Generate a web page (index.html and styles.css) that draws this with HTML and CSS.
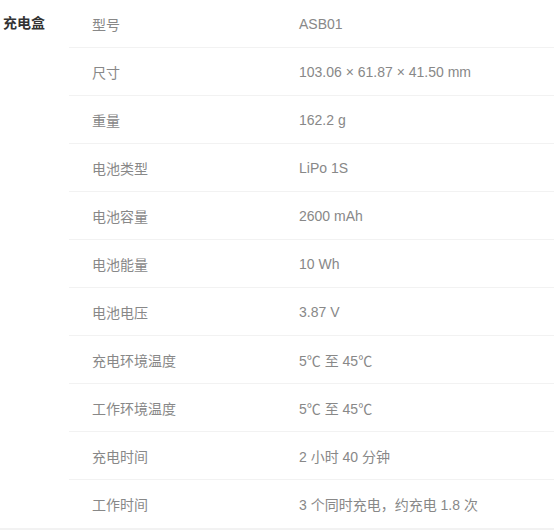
FILE: index.html
```html
<!DOCTYPE html>
<html lang="zh-CN">
<head>
<meta charset="utf-8">
<title>充电盒</title>
<link rel="stylesheet" href="styles.css">
</head>
<body>
<section class="spec">
  <h3 class="spec-title">充电盒</h3>
  <div class="spec-rows">
    <div class="row"><span class="key">型号</span><span class="val">ASB01</span></div>
    <div class="row"><span class="key">尺寸</span><span class="val">103.06 × 61.87 × 41.50 mm</span></div>
    <div class="row"><span class="key">重量</span><span class="val">162.2 g</span></div>
    <div class="row"><span class="key">电池类型</span><span class="val">LiPo 1S</span></div>
    <div class="row"><span class="key">电池容量</span><span class="val">2600 mAh</span></div>
    <div class="row"><span class="key">电池能量</span><span class="val">10 Wh</span></div>
    <div class="row"><span class="key">电池电压</span><span class="val">3.87 V</span></div>
    <div class="row"><span class="key">充电环境温度</span><span class="val">5℃ 至 45℃</span></div>
    <div class="row"><span class="key">工作环境温度</span><span class="val">5℃ 至 45℃</span></div>
    <div class="row"><span class="key">充电时间</span><span class="val">2 小时 40 分钟</span></div>
    <div class="row"><span class="key">工作时间</span><span class="val">3 个同时充电，约充电 1.8 次</span></div>
  </div>
</section>
</body>
</html>
```

FILE: styles.css
```css
html, body {
  margin: 0;
  padding: 0;
  background: #ffffff;
}
body {
  font-family: "Liberation Sans", "Noto Sans CJK SC", sans-serif;
  font-size: 14px;
}
.spec {
  display: flex;
  border-bottom: 2px solid #f2f2f2;
}
.spec-title {
  width: 66px;
  margin: 0;
  padding-left: 3px;
  font-size: 14px;
  font-weight: bold;
  color: #333333;
  line-height: 47px;
}
.spec-rows {
  flex: 1;
}
.row {
  display: flex;
  align-items: center;
  height: 47px;
  border-bottom: 1px solid #f2f2f2;
  padding-left: 23px;
  color: #888888;
}
.row:last-child {
  height: 48px;
  border-bottom: none;
}
.key {
  width: 207px;
  flex-shrink: 0;
}
.val {
  flex: 1;
}
```
